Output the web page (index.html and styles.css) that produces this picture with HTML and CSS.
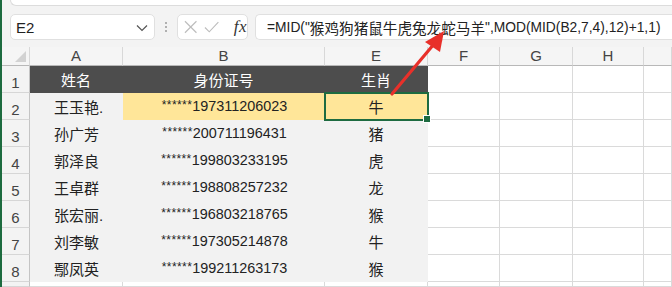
FILE: index.html
```html
<!DOCTYPE html>
<html lang="zh">
<head>
<meta charset="utf-8">
<link rel="stylesheet" href="styles.css">
</head>
<body>
<div class="app">
  <div class="ribbon"></div>
  <div class="fbar">
    <div class="namebox"><span>E2</span>
      <svg class="chev" width="12" height="8" viewBox="0 0 12 8"><path d="M1 1.5 L6 6.5 L11 1.5" fill="none" stroke="#555" stroke-width="1.2"/></svg>
    </div>
    <div class="dots"><i></i><i></i><i></i></div>
    <div class="fxbox">
      <svg width="14" height="14" viewBox="0 0 14 14"><path d="M1 1 L13 13 M13 1 L1 13" stroke="#bdbdbd" stroke-width="1.2" fill="none"/></svg>
      <svg width="16" height="14" viewBox="0 0 16 14"><path d="M1 7.5 L5.5 12 L15 2" stroke="#bdbdbd" stroke-width="1.2" fill="none"/></svg>
      <span class="fx">fx</span>
    </div>
    <div class="formula">=MID("<span class="cjk">猴鸡狗猪鼠牛虎兔龙蛇马羊</span>",MOD(MID(B2,7,4),12)+1,1)</div>
  </div>
  <div class="sheet">
    <div class="ch corner"><span class="tri"></span></div>
    <div class="ch">A</div>
    <div class="ch">B</div>
    <div class="ch">E</div>
    <div class="ch">F</div>
    <div class="ch">G</div>
    <div class="ch">H</div>
    <div class="ch"></div>

    <div class="rh">1</div>
    <div class="c dark">姓名</div>
    <div class="c dark">身份证号</div>
    <div class="c dark">生肖</div>
    <div class="c"></div><div class="c"></div><div class="c"></div><div class="c"></div>

    <div class="rh">2</div>
    <div class="c gray name">王玉艳.</div>
    <div class="c yellow id"><span class="ast">******</span>197311206023</div>
    <div class="c yellow sel">牛</div>
    <div class="c"></div><div class="c"></div><div class="c"></div><div class="c"></div>

    <div class="rh">3</div>
    <div class="c gray name">孙广芳</div>
    <div class="c gray id"><span class="ast">******</span>200711196431</div>
    <div class="c gray">猪</div>
    <div class="c"></div><div class="c"></div><div class="c"></div><div class="c"></div>

    <div class="rh">4</div>
    <div class="c gray name">郭泽良</div>
    <div class="c gray id"><span class="ast">******</span>199803233195</div>
    <div class="c gray">虎</div>
    <div class="c"></div><div class="c"></div><div class="c"></div><div class="c"></div>

    <div class="rh">5</div>
    <div class="c gray name">王卓群</div>
    <div class="c gray id"><span class="ast">******</span>198808257232</div>
    <div class="c gray">龙</div>
    <div class="c"></div><div class="c"></div><div class="c"></div><div class="c"></div>

    <div class="rh">6</div>
    <div class="c gray name">张宏丽.</div>
    <div class="c gray id"><span class="ast">******</span>196803218765</div>
    <div class="c gray">猴</div>
    <div class="c"></div><div class="c"></div><div class="c"></div><div class="c"></div>

    <div class="rh">7</div>
    <div class="c gray name">刘李敏</div>
    <div class="c gray id"><span class="ast">******</span>197305214878</div>
    <div class="c gray">牛</div>
    <div class="c"></div><div class="c"></div><div class="c"></div><div class="c"></div>

    <div class="rh">8</div>
    <div class="c gray name">鄢凤英</div>
    <div class="c gray id"><span class="ast">******</span>199211263173</div>
    <div class="c gray">猴</div>
    <div class="c"></div><div class="c"></div><div class="c"></div><div class="c"></div>

    <div class="rh"></div>
    <div class="c"></div><div class="c"></div><div class="c"></div>
    <div class="c"></div><div class="c"></div><div class="c"></div><div class="c"></div>
  </div>
  <svg class="arrow" width="672" height="287" viewBox="0 0 672 287">
    <line x1="392" y1="94" x2="434" y2="44" stroke="#e8302a" stroke-width="3.2" stroke-linecap="round"/>
    <polygon points="444,31 425,42 440,52" fill="#e8302a"/>
  </svg>
</div>
</body>
</html>
```

FILE: styles.css
```css
* { box-sizing: border-box; }
html, body { margin: 0; padding: 0; }
body {
  width: 672px;
  height: 287px;
  overflow: hidden;
  background: #f3f3f3;
  font-family: "Liberation Sans", "Noto Sans CJK SC", sans-serif;
  color: #222;
}
.app {
  position: relative;
  height: 287px;
  border-left: 2px solid #1d6b3f;
}
.ribbon {
  height: 6px;
  margin-left: 8px;
  background: #ffffff;
  border: 1px solid #dcdcdc;
  border-top: none;
  border-right: none;
  border-bottom-left-radius: 7px;
}
.fbar {
  display: flex;
  align-items: center;
  height: 26px;
  margin-top: 8px;
  padding-left: 8px;
}
.namebox {
  width: 145px;
  height: 26px;
  background: #fff;
  border: 1px solid #e0e0e0;
  border-radius: 5px;
  display: flex;
  align-items: center;
  justify-content: space-between;
  padding: 0 6px 0 5px;
  font-size: 15px;
  color: #222;
}
.chev { margin-top: 1px; }
.dots {
  width: 22px;
  display: flex;
  flex-direction: column;
  align-items: center;
  gap: 2px;
}
.dots i {
  width: 2px;
  height: 2px;
  background: #9a9a9a;
  border-radius: 1px;
}
.fxbox {
  width: 71px;
  height: 26px;
  background: #fff;
  border: 1px solid #e0e0e0;
  border-radius: 5px;
  display: flex;
  align-items: center;
  padding: 0 0 0 6px;
  gap: 7px;
}
.fx {
  font-family: "Liberation Serif", "DejaVu Serif", serif;
  font-style: italic;
  font-size: 17px;
  color: #333;
  margin-left: 7px;
  letter-spacing: 0.5px;
}
.formula {
  flex: 1;
  height: 26px;
  margin-left: 7px;
  background: #fff;
  border: 1px solid #e0e0e0;
  border-right: none;
  border-radius: 5px 0 0 5px;
  display: flex;
  align-items: center;
  padding-left: 11px;
  font-size: 13.8px;
  color: #222;
  white-space: nowrap;
  overflow: hidden;
}
.cjk { font-size: 14.6px; }
.sheet {
  margin-top: 7px;
  display: grid;
  grid-template-columns: 28px 93px 202px 103px 72px 73px 71px 1fr;
  grid-template-rows: 19px repeat(8, 27px) 1fr;
  height: 240px;
  background: #fff;
}
.ch {
  background: #f5f5f5;
  border-right: 1px solid #d8d8d8;
  border-bottom: 1px solid #b8b8b8;
  font-size: 15px;
  color: #444;
  display: flex;
  align-items: flex-end;
  justify-content: center;
  line-height: 18px;
}
.corner { position: relative; }
.tri {
  position: absolute;
  right: 3px;
  bottom: 3px;
  width: 0;
  height: 0;
  border-left: 11px solid transparent;
  border-bottom: 11px solid #d2d2d2;
}
.rh {
  background: #f3f3f3;
  border-right: 1px solid #c4c4c4;
  border-bottom: 1px solid #d6d6d6;
  font-size: 15px;
  color: #444;
  display: flex;
  align-items: flex-end;
  justify-content: center;
  padding-bottom: 1px;
}
.c {
  border-right: 1px solid #dadada;
  border-bottom: 1px solid #dadada;
  display: flex;
  align-items: center;
  justify-content: center;
  font-size: 15px;
  color: #222;
  white-space: nowrap;
}
.dark {
  background: #4d4d4d;
  border-color: #4d4d4d;
  color: #fff;
  padding-top: 1px;
}
.gray {
  background: #f2f2f2;
  border-color: #f2f2f2;
}
.yellow {
  background: #ffe699;
  border-color: #ffe699;
}
.name {
  justify-content: flex-start;
  padding-left: 24px;
}
.id { font-size: 14.4px; padding-left: 2px; }
.ast { font-size: 12px; letter-spacing: 0.4px; position: relative; top: -1px; }
.sel {
  position: relative;
  outline: 2px solid #1e6b41;
  outline-offset: -1px;
  z-index: 1;
}
.sel::after {
  content: "";
  position: absolute;
  right: -4px;
  bottom: -4px;
  width: 6px;
  height: 6px;
  background: #1e6b41;
  border: 1px solid #fff;
}
.arrow {
  position: absolute;
  left: -2px;
  top: 0;
  pointer-events: none;
  z-index: 5;
}
```
